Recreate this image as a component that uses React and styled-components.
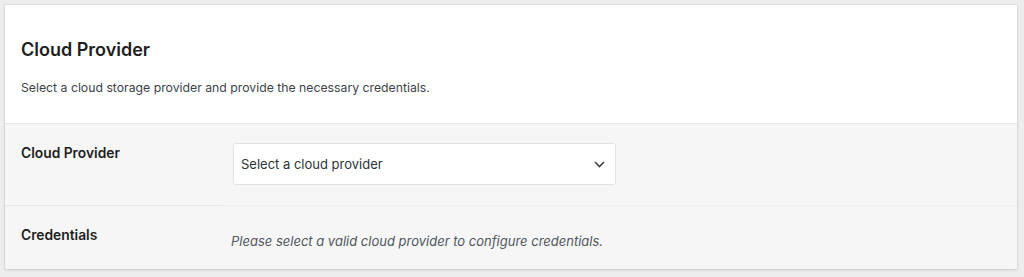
import React from 'react'
import styled, { createGlobalStyle } from 'styled-components'

const Global = createGlobalStyle`
  html, body {
    margin: 0;
    padding: 0;
    background: #ededed;
    font-family: Inter, "Noto Sans", "Liberation Sans", sans-serif;
    color: #1d2327;
  }
`

const Page = styled.div`
  padding: 5px 7px 7px 5px;
`

const Card = styled.div`
  background: #f6f6f6;
  box-shadow: 0 1px 3px rgba(0, 0, 0, 0.12), 0 0 0 1px rgba(0, 0, 0, 0.04);
`

const Header = styled.div`
  background: #fff;
  padding: 34px 16px 27px;
  border-bottom: 1px solid #e6e6e6;
`

const Title = styled.h2`
  margin: 0 0 19px;
  font-size: 18px;
  font-weight: 600;
  line-height: 22px;
  color: #1e1e1e;
`

const Desc = styled.p`
  margin: 0;
  font-size: 12.25px;
  line-height: 16px;
  color: #3c434a;
`

const Row = styled.div`
  display: grid;
  grid-template-columns: 217px 1fr;
  & + & > * {
    border-top: 1px solid #efefef;
  }
  & + & > *:first-child {
    border-top-color: #e6e6e6;
  }
`

const Label = styled.div`
  padding: ${p => p.$top}px 16px 0;
  font-size: 13.8px;
  font-weight: 600;
  line-height: 18px;
  color: #1e1e1e;
`

const Value = styled.div`
  padding: ${p => p.$top}px 11px ${p => p.$bottom}px;
`

const SelectBox = styled.div`
  width: 383px;
  height: 42px;
  box-sizing: border-box;
  display: flex;
  align-items: center;
  justify-content: space-between;
  padding: 0 10px 0 7px;
  background: #fff;
  border: 1px solid #e2e2e2;
  border-radius: 3px;
  font-size: 13px;
  color: #2c3338;
`

const Note = styled.p`
  margin: 0 0 0 -2px;
  font-size: 13px;
  font-style: italic;
  line-height: 18px;
  color: #50575e;
`

const Chevron = () => (
  <svg width="11" height="7" viewBox="0 0 11 7" fill="none">
    <path d="M1 1l4.5 4.5L10 1" stroke="#3c434a" strokeWidth="1.6" />
  </svg>
)

export default function App() {
  return (
    <>
      <Global />
      <Page>
        <Card>
          <Header>
            <Title>Cloud Provider</Title>
            <Desc>Select a cloud storage provider and provide the necessary credentials.</Desc>
          </Header>
          <Row>
            <Label $top={20}>Cloud Provider</Label>
            <Value $top={19} $bottom={20}>
              <SelectBox>
                <span>Select a cloud provider</span>
                <Chevron />
              </SelectBox>
            </Value>
          </Row>
          <Row>
            <Label $top={20}>Credentials</Label>
            <Value $top={26} $bottom={19}>
              <Note>Please select a valid cloud provider to configure credentials.</Note>
            </Value>
          </Row>
        </Card>
      </Page>
    </>
  )
}
